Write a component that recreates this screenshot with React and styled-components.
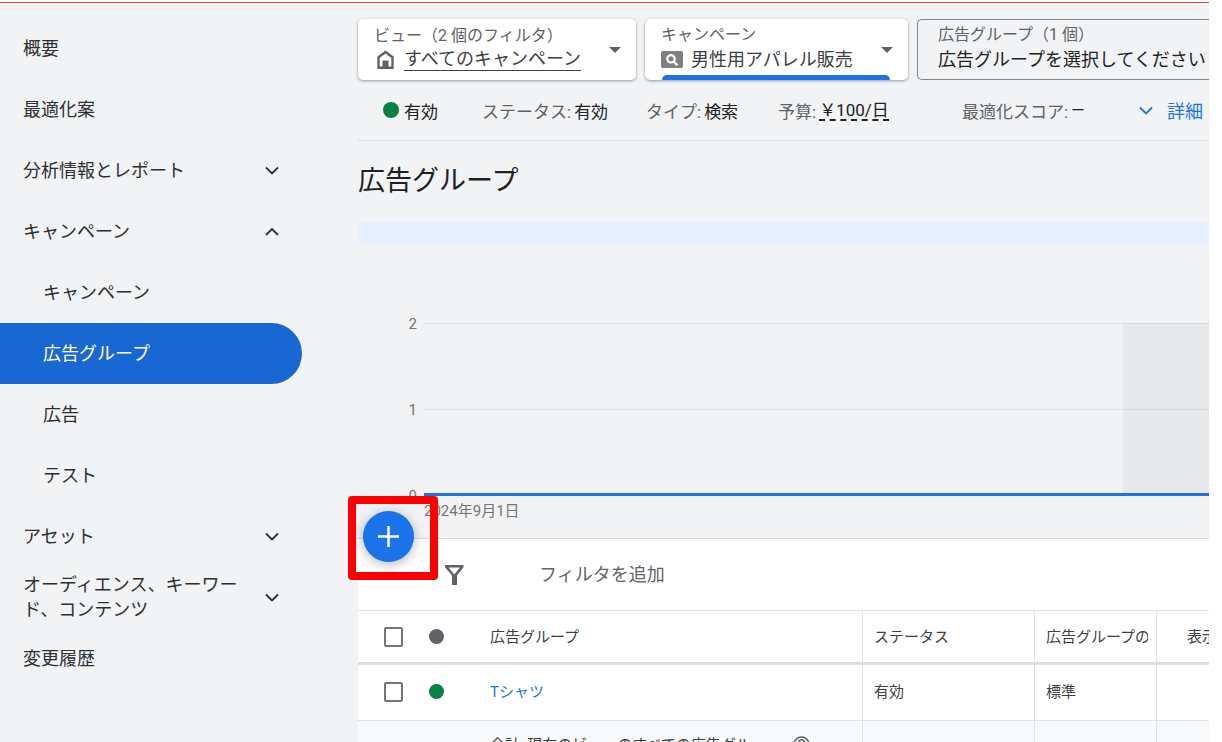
import React from "react"

import styled, { createGlobalStyle } from "styled-components";

const GlobalStyle = createGlobalStyle`
  * {
    box-sizing: border-box;
  }

  body {
    margin: 0;
    background: #fff;
    color: #3c4043;
    font-family: Roboto, "Noto Sans CJK JP", sans-serif;
    font-size: 18px;
    font-weight: 400;
  }

  button, input {
    font: inherit;
    color: inherit;
    margin: 0;
  }

  button {
    border: 0;
    background: none;
    padding: 0;
    text-align: left;
    cursor: pointer;
  }

  a {
    color: inherit;
    text-decoration: none;
  }
`;

const Page = styled.div`
  height: 100vh;
  padding: 2px 13px 0 0;
  overflow: hidden;
`;

const Shell = styled.div`
  display: grid;
  grid-template-columns: 358px minmax(0, 1fr);
  height: 100%;
  overflow: hidden;
  border-top: 1px solid #ea4335;
  background: #f1f3f4;
`;

/* Sidebar */
const Sidebar = styled.nav`
  padding: 15px 56px 0 0;
`;

const NavList = styled.ul`
  list-style: none;
  margin: 0;
  padding: 0;
`;

const NavLink = styled.a`
  display: flex;
  align-items: center;
  justify-content: space-between;
  height: 61px;
  padding: 0 23px 1px ${p => (p.$sub ? "43px" : "23px")};
  border-radius: 0 31px 31px 0;
  line-height: 25px;
  color: ${p => (p.$active ? "#fff" : "#2d2f33")};
  background: ${p => (p.$active ? "#1967d2" : "transparent")};

  span {
    max-width: 220px;
  }

  svg {
    flex: none;
  }
`;

/* Scope cards */
const Main = styled.main`
  display: flex;
  flex-direction: column;
  min-width: 0;
`;

const Scopes = styled.div`
  display: flex;
  flex: none;
  gap: 9px;
  padding-top: 16px;
`;

const Scope = styled.button`
  display: flex;
  flex: none;
  align-items: center;
  justify-content: space-between;
  position: relative;
  width: ${p => p.$width};
  height: 61px;
  padding: 0 15px 0 16px;
  border-radius: 5px;
  background: #fff;
  box-shadow: 0 1px 3px rgba(60, 64, 67, 0.5);
`;

const OutlinedScope = styled(Scope)`
  flex: 1 0 292px;
  padding-left: 20px;
  border: 1px solid #80868b;
  border-right: 0;
  border-radius: 5px 0 0 5px;
  background: transparent;
  box-shadow: none;
`;

const ScopeText = styled.span`
  display: flex;
  flex-direction: column;
  padding-bottom: 4px;
  white-space: nowrap;
`;

const ScopeLabel = styled.span`
  font-size: 16px;
  line-height: 24px;
  color: #5f6368;
`;

const ScopeValue = styled.span`
  display: flex;
  align-items: center;
  gap: 8px;
  line-height: 26px;
  color: ${p => (p.$dark ? "#202124" : "#3c4043")};
`;

const Underlined = styled.span`
  line-height: 22px;
  border-bottom: 1px solid #3c4043;
`;

const ActiveBar = styled.span`
  position: absolute;
  left: 17px;
  right: 18px;
  bottom: 0;
  height: 5px;
  border-radius: 5px 5px 0 0;
  background: #1a73e8;
`;

/* Campaign status line */
const StatusLine = styled.div`
  display: flex;
  flex: none;
  align-items: center;
  height: 61px;
  padding-left: 25px;
  border-bottom: 1px solid #dadce0;
  font-size: 17px;
  white-space: nowrap;
`;

const StatusItem = styled.span`
  display: flex;
  flex: none;
  align-items: center;
  gap: ${p => p.$gap || "3px"};
  width: ${p => p.$width};
  color: #5f6368;

  b {
    font-weight: 400;
    color: #202124;
  }
`;

const Budget = styled.b`
  line-height: 18px;
  border-top: 2px solid transparent;
  border-bottom: 2px dashed #202124;
`;

const Details = styled.button`
  display: flex;
  align-items: center;
  gap: 14px;
  font-size: 18px;
  color: #1a73e8;
`;

const Dot = styled.span`
  display: block;
  width: ${p => p.$size || "15px"};
  height: ${p => p.$size || "15px"};
  border-radius: 50%;
  background: ${p => p.$color};
`;

const Title = styled.h1`
  margin: 0;
  font-size: 27px;
  font-weight: 400;
  line-height: 81px;
  color: #202124;
`;

const Banner = styled.div`
  flex: none;
  height: 22px;
  background: #e6f0fe;
`;

/* Chart */
const Chart = styled.div`
  display: grid;
  grid-template-columns: 59px minmax(0, 1fr);
  column-gap: 7px;
  flex: none;
  height: 294px;
  padding-top: 79px;
  font-size: 15px;
  color: #757575;
`;

const Axis = styled.div`
  display: grid;
  grid-template-rows: repeat(3, 86px);
  height: 172px;
  text-align: right;
  line-height: 2px;
`;

const Plot = styled.div`
  display: grid;
  grid-template-columns: minmax(0, 1fr) 86px;
  height: 173px;
  border-bottom: 3px solid #1a73e8;
  background: linear-gradient(#e0e2e3, #e0e2e3) 0 0 / 100% 1px no-repeat,
    linear-gradient(#e0e2e3, #e0e2e3) 0 86px / 100% 1px no-repeat;
`;

const Shade = styled.div`
  grid-column: 2;
  background: rgba(60, 64, 90, 0.06);
`;

const DateLabel = styled.div`
  line-height: 30px;
`;

/* Table */
const Panel = styled.section`
  position: relative;
  flex: none;
  border-top: 1px solid #dadce0;
  background: #fff;
`;

const Toolbar = styled.div`
  display: flex;
  align-items: center;
  gap: 73px;
  height: 71px;
  padding-left: 84px;
  color: #5f6368;
`;

const FilterButton = styled.button`
  display: flex;
`;

const AddFilter = styled.button`
  padding-bottom: 4px;
`;

const AddButton = styled.button`
  display: flex;
  align-items: center;
  justify-content: center;
  width: 51px;
  height: 51px;
  border-radius: 50%;
  background: #1a73e8;
  box-shadow: 0 2px 12px rgba(60, 64, 67, 0.4);
`;

const Highlight = styled.div`
  position: absolute;
  left: -10px;
  top: -43px;
  width: 90px;
  height: 84px;
  padding: 7px;
  border: 8px solid #f00;
  border-radius: 4px;
`;

const Table = styled.table`
  width: 100%;
  table-layout: fixed;
  border-collapse: separate;
  border-spacing: 0;
  font-size: 15px;
  line-height: 20px;
  color: #3c4043;

  a {
    color: #1a73e8;
  }
`;

const Row = styled.tr`
  background: ${p => (p.$total ? "#f8f9fa" : "#fff")};
`;

const Cell = styled.td`
  height: ${p => (p.$total ? "50px" : p.$head ? "54px" : "56px")};
  padding: 0 0 ${p => (p.$head ? "0" : "2px")} ${p => p.$pad || "11px"};
  border-top: 1px solid #e0e2e6;
  border-bottom: ${p => (p.$head ? "2px solid #dadce0" : "0")};
  border-left: ${p => (p.$line ? "1px solid #e0e2e6" : "0")};
  overflow: hidden;
  white-space: nowrap;
  font-weight: 400;
  text-align: left;
`;

const Clip = styled.span`
  display: block;
  width: ${p => p.$width};
  overflow: hidden;
`;

const TotalLabel = styled.span`
  display: flex;
  align-items: center;
  gap: 39px;
`;

const Checkbox = styled.input`
  display: block;
  appearance: none;
  width: 19px;
  height: 20px;
  border: 2px solid #757575;
  border-radius: 2px;
  background: #fff;
`;

const Chevron = ({ up }) => (
  <svg width="14" height="9" viewBox="0 0 14 9" fill="none" stroke="currentColor" strokeWidth="1.8">
    <path d={up ? "M1 8 7 2l6 6" : "M1 1.500l6 6 6-6"} />
  </svg>
);

const Caret = () => (
  <svg width="12" height="6" viewBox="0 0 12 6">
    <path d="M0 0h12L6 6z" fill="#5f6368" />
  </svg>
);

const HomeIcon = () => (
  <svg width="22" height="20" viewBox="0 0 22 20">
    <path d="M4.500 7.200 11.500 2l7 5.200v10.500h-14z" fill="none" stroke="#5f6368" strokeWidth="2.400" />
    <path d="M8.500 10.500h6v8h-6z" fill="#5f6368" />
  </svg>
);

const SearchIcon = () => (
  <svg width="22" height="17" viewBox="0 0 22 17">
    <rect width="22" height="17" rx="2" fill="#80807f" />
    <circle cx="10" cy="7.800" r="3.700" fill="none" stroke="#fff" strokeWidth="2.200" />
    <path d="M12.500 10.300l4 4" stroke="#fff" strokeWidth="2.400" />
  </svg>
);

const FilterIcon = () => (
  <svg width="24" height="22" viewBox="0 0 24 22">
    <path
      d="M3 1h18.500v2.200L15 11.500V21h-5v-9.500L3 3.200zM6.600 3.400l5.700 7 5.600-7z"
      fill="#5f6368"
      fillRule="evenodd"
    />
  </svg>
);

const PlusIcon = () => (
  <svg width="21" height="21" viewBox="0 0 21 21" stroke="#fff" strokeWidth="2.500">
    <path d="M10.500 0v21M0 10.500h21" />
  </svg>
);

const HelpIcon = () => (
  <svg width="17" height="17" viewBox="0 0 17 17" fill="none" stroke="#5f6368" strokeWidth="1.600">
    <circle cx="8.500" cy="8.500" r="7.500" />
    <path d="M5.700 6.700a2.800 2.800 0 1 1 4.200 2.300c-.9.600-1.400 1-1.400 1.900M8.500 12.200v1.600" />
  </svg>
);

const navItems = [
  { text: "概要" },
  { text: "最適化案" },
  { text: "分析情報とレポート", arrow: "down" },
  { text: "キャンペーン", arrow: "up" },
  { text: "キャンペーン", sub: true },
  { text: "広告グループ", sub: true, active: true },
  { text: "広告", sub: true },
  { text: "テスト", sub: true },
  { text: "アセット", arrow: "down" },
  { text: "オーディエンス、キーワード、コンテンツ", arrow: "down" },
  { text: "変更履歴" },
];

class App extends React.Component {
  renderSidebar = () => (
    <Sidebar>
      <NavList>
        {navItems.map((item, i) => (
          <li key={i}>
            <NavLink href="#" $sub={item.sub} $active={item.active}>
              <span>{item.text}</span>
              {item.arrow && <Chevron up={item.arrow === "up"} />}
            </NavLink>
          </li>
        ))}
      </NavList>
    </Sidebar>
  );

  renderScopes = () => (
    <Scopes>
      <Scope $width="278px">
        <ScopeText>
          <ScopeLabel>ビュー（2 個のフィルタ）</ScopeLabel>
          <ScopeValue><HomeIcon /><Underlined>すべてのキャンペーン</Underlined></ScopeValue>
        </ScopeText>
        <Caret />
      </Scope>
      <Scope $width="263px">
        <ScopeText>
          <ScopeLabel>キャンペーン</ScopeLabel>
          <ScopeValue><SearchIcon />男性用アパレル販売</ScopeValue>
        </ScopeText>
        <Caret />
        <ActiveBar />
      </Scope>
      <OutlinedScope>
        <ScopeText>
          <ScopeLabel>広告グループ（1 個）</ScopeLabel>
          <ScopeValue $dark>広告グループを選択してください</ScopeValue>
        </ScopeText>
      </OutlinedScope>
    </Scopes>
  );

  renderStatus = () => (
    <StatusLine>
      <StatusItem $width="99px" $gap="5px"><Dot $size="16px" $color="#0b8043" /><b>有効</b></StatusItem>
      <StatusItem $width="164px">ステータス: <b>有効</b></StatusItem>
      <StatusItem $width="132px">タイプ: <b>検索</b></StatusItem>
      <StatusItem $width="184px">予算: <Budget>￥100/日</Budget></StatusItem>
      <StatusItem $width="177px">最適化スコア: <b>—</b></StatusItem>
      <Details><Chevron />詳細</Details>
    </StatusLine>
  );

  renderChart = () => (
    <Chart>
      <Axis>
        <span>2</span>
        <span>1</span>
        <span>0</span>
      </Axis>
      <div>
        <Plot><Shade /></Plot>
        <DateLabel>2024年9月1日</DateLabel>
      </div>
    </Chart>
  );

  renderTable = () => (
    <Table>
      <colgroup>
        <col style={{ width: 67 }} />
        <col style={{ width: 54 }} />
        <col />
        <col style={{ width: 172 }} />
        <col style={{ width: 122 }} />
        <col style={{ width: 53 }} />
      </colgroup>
      <thead>
        <Row>
          <Cell as="th" $head $pad="26px"><Checkbox type="checkbox" aria-label="すべて選択" /></Cell>
          <Cell as="th" $head $pad="4px"><Dot $color="#5f6368" /></Cell>
          <Cell as="th" $head>広告グループ</Cell>
          <Cell as="th" $head $line>ステータス</Cell>
          <Cell as="th" $head $line><Clip $width="102px">広告グループの</Clip></Cell>
          <Cell as="th" $head $line $pad="30px">表示</Cell>
        </Row>
      </thead>
      <tbody>
        <Row>
          <Cell $pad="26px"><Checkbox type="checkbox" aria-label="Tシャツ" /></Cell>
          <Cell $pad="4px"><Dot $color="#0b8043" /></Cell>
          <Cell><a href="#">Tシャツ</a></Cell>
          <Cell $line>有効</Cell>
          <Cell $line>標準</Cell>
          <Cell $line />
        </Row>
        <Row $total>
          <Cell $total />
          <Cell $total />
          <Cell $total>
            <TotalLabel>
              <Clip $width="264px">合計: 現在のビューのすべての広告グル</Clip>
              <HelpIcon />
            </TotalLabel>
          </Cell>
          <Cell $total $line />
          <Cell $total $line />
          <Cell $total $line />
        </Row>
      </tbody>
    </Table>
  );

  render() {
    return (
      <Page>
        <GlobalStyle />
        <Shell>
          {this.renderSidebar()}
          <Main>
            {this.renderScopes()}
            {this.renderStatus()}
            <Title>広告グループ</Title>
            <Banner />
            {this.renderChart()}
            <Panel>
              <Toolbar>
                <FilterButton aria-label="フィルタ"><FilterIcon /></FilterButton>
                <AddFilter>フィルタを追加</AddFilter>
              </Toolbar>
              {this.renderTable()}
              <Highlight>
                <AddButton aria-label="作成"><PlusIcon /></AddButton>
              </Highlight>
            </Panel>
          </Main>
        </Shell>
      </Page>
    )
  }
}

export default App;
